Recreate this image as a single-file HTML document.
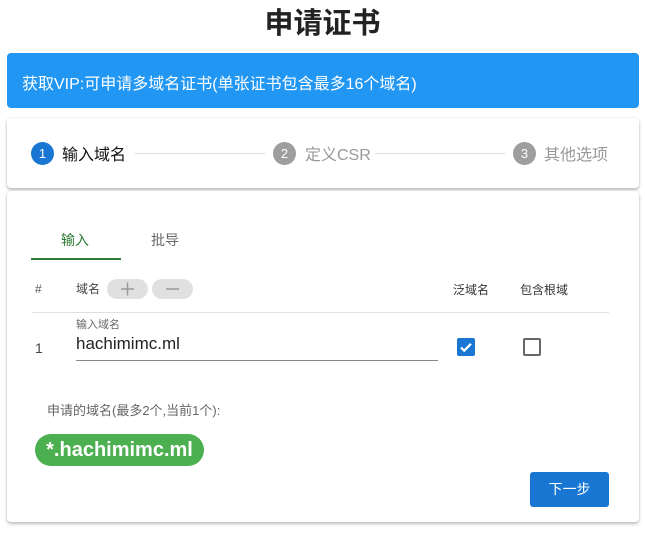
<!DOCTYPE html>
<html><head><meta charset="utf-8"><style>
*{box-sizing:border-box;margin:0;padding:0}
body{width:645px;height:533px;background:#fff;font-family:"Liberation Sans","Noto Sans CJK SC",sans-serif;position:relative;overflow:hidden;color:#222}
.a{position:absolute;white-space:nowrap}
.card{position:absolute;left:7px;width:632px;background:#fff;border-radius:4px;box-shadow:0 2px 3px rgba(0,0,0,.25),0 0 2px rgba(0,0,0,.08)}
.circ{position:absolute;width:23px;height:23px;border-radius:50%;color:#fff;font-size:13px;line-height:23px;text-align:center;top:142px}
.ln{position:absolute;top:153px;height:1px;background:#ddd}
.pill{position:absolute;top:279px;width:41px;height:20px;border-radius:10px;background:#e0e0e0}
.pill svg{position:absolute;left:13px;top:3px}
</style></head><body>
<div class="a" style="left:0;width:645px;text-align:center;top:0px;font-size:29px;font-weight:bold;color:#222">申请证书</div>
<div class="a" style="left:7px;top:53px;width:632px;height:55px;background:#2196f3;border-radius:4px"></div>
<div class="a" style="left:22px;top:70px;font-size:16px;color:#fff">获取VIP:可申请多域名证书(单张证书包含最多16个域名)</div>
<div class="card" style="top:118px;height:70px"></div>
<div class="card" style="top:191px;height:331px"></div>
<div class="circ" style="left:31px;background:#1976d2">1</div>
<div class="a" style="left:62px;top:141px;font-size:16px;color:#111">输入域名</div>
<div class="ln" style="left:135px;width:130px"></div>
<div class="circ" style="left:273px;background:#9e9e9e">2</div>
<div class="a" style="left:305px;top:141px;font-size:16px;color:#999">定义CSR</div>
<div class="ln" style="left:375px;width:130px"></div>
<div class="circ" style="left:513px;background:#9e9e9e">3</div>
<div class="a" style="left:544px;top:141px;font-size:16px;color:#999">其他选项</div>
<div class="a" style="left:61px;top:230px;font-size:14px;color:#2e7d32">输入</div>
<div class="a" style="left:31px;top:258px;width:90px;height:2px;background:#2e7d32"></div>
<div class="a" style="left:151px;top:230px;font-size:14px;color:#666">批导</div>
<div class="a" style="left:35px;top:282px;font-size:12px;color:#555">#</div>
<div class="a" style="left:76px;top:280px;font-size:12px;color:#444">域名</div>
<div class="pill" style="left:107px"><svg width="15" height="14"><path d="M1 7h13M7.5 0.5v13" stroke="#999" stroke-width="1.5"/></svg></div>
<div class="pill" style="left:152px"><svg width="15" height="14"><path d="M1 7h13" stroke="#999" stroke-width="1.5"/></svg></div>
<div class="a" style="left:453px;top:281px;font-size:12px;color:#333">泛域名</div>
<div class="a" style="left:520px;top:281px;font-size:12px;color:#333">包含根域</div>
<div class="a" style="left:32px;top:312px;width:577px;height:1px;background:#e0e0e0"></div>
<div class="a" style="left:76px;top:316px;font-size:11px;color:#666">输入域名</div>
<div class="a" style="left:76px;top:334px;font-size:17px;color:#222">hachimimc.ml</div>
<div class="a" style="left:76px;top:360px;width:362px;height:1px;background:#888"></div>
<div class="a" style="left:35px;top:340px;font-size:14px;color:#444">1</div>
<div class="a" style="left:457px;top:338px;width:18px;height:18px;background:#1976d2;border-radius:2px"><svg width="18" height="18" viewBox="0 0 18 18"><path d="M4 9.5l3.2 3.2L14 5.8" stroke="#fff" stroke-width="2.2" fill="none"/></svg></div>
<div class="a" style="left:523px;top:338px;width:18px;height:18px;border:2px solid #666;border-radius:2px"></div>
<div class="a" style="left:47px;top:400px;font-size:13px;color:#666">申请的域名(最多2个,当前1个):</div>
<div class="a" style="left:35px;top:434px;width:169px;height:32px;background:#4caf50;border-radius:16px;color:#fff;font-weight:bold;font-size:20px;line-height:32px;text-align:center">*.hachimimc.ml</div>
<div class="a" style="left:530px;top:472px;width:79px;height:35px;background:#1976d2;border-radius:3px;color:#fff;font-size:14px;line-height:35px;text-align:center">下一步</div>
</body></html>
